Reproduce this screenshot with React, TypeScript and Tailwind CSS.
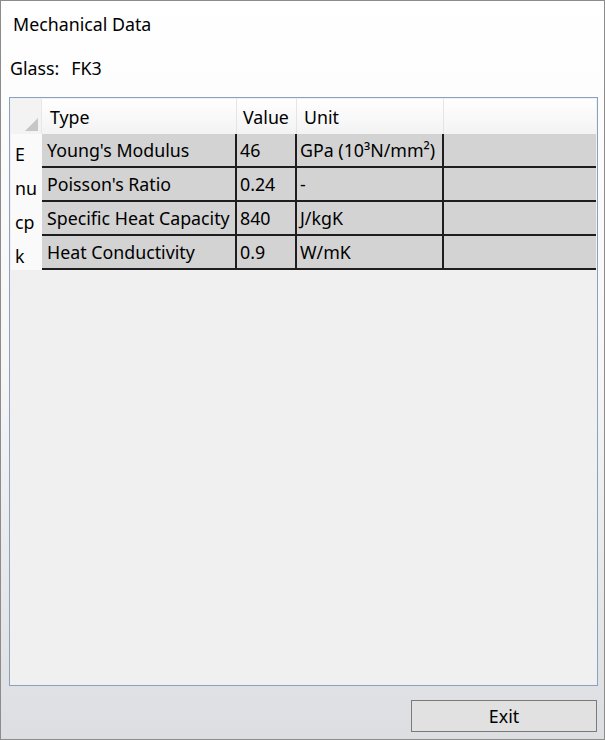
import React from 'react';

interface Row {
  key: string;
  type: string;
  value: string;
  unit: string;
}

const rows: Row[] = [
  { key: 'E', type: "Young's Modulus", value: '46', unit: 'GPa (10³N/mm²)' },
  { key: 'nu', type: "Poisson's Ratio", value: '0.24', unit: '-' },
  { key: 'cp', type: 'Specific Heat Capacity', value: '840', unit: 'J/kgK' },
  { key: 'k', type: 'Heat Conductivity', value: '0.9', unit: 'W/mK' },
];

export default function App() {
  return (
    <div
      className="w-[605px] h-[740px] flex flex-col border border-[#8c8c8c] bg-gradient-to-b from-white via-[#f6f6f7] to-[#dcdee1] text-[#000] text-[17.8px]"
      style={{ fontFamily: '"Noto Sans", "Open Sans", sans-serif' }}
    >
      <div className="pl-[12px] pt-[10px] h-[34px] leading-[26px]">Mechanical Data</div>
      <div className="pl-[9px] mt-[21px] h-[24px] leading-[24px] flex gap-[12px]">
        <span>Glass:</span>
        <span>FK3</span>
      </div>

      <div className="ml-[8px] mr-[6px] mt-[17px] h-[589px] border border-[#8aa2c0] bg-[#f0f0f0] flex flex-col p-[1px]">
        {/* header */}
        <div className="flex h-[35px] bg-gradient-to-b from-white to-[#f3f3f3]">
          <div className="w-[31px] relative border-r border-[#e8e8e8] bg-[#f3f3f3]">
            <svg className="absolute right-[3px] bottom-[3px]" width="13" height="13" viewBox="0 0 13 13">
              <polygon points="13,0 13,13 0,13" fill="#c6c6c6" />
            </svg>
          </div>
          <div className="w-[195px] pl-[8px] leading-[36px] border-r border-[#e5e5e5]">Type</div>
          <div className="w-[60px] pl-[6px] leading-[36px] border-r border-[#e5e5e5]">Value</div>
          <div className="w-[147px] pl-[7px] leading-[36px] border-r border-[#e5e5e5]">Unit</div>
          <div className="flex-1" />
        </div>

        {rows.map((r) => (
          <div key={r.key} className="flex h-[34px]">
            <div className="w-[31px] bg-[#fafafa] pl-[4px] leading-[40px]">{r.key}</div>
            <div className="flex-1 flex bg-[#d3d3d3] border-b-2 border-[#1e1e1e]">
              <div className="w-[195px] pl-[5px] leading-[32px] border-r-2 border-[#1e1e1e] whitespace-nowrap">{r.type}</div>
              <div className="w-[60px] pl-[3px] leading-[32px] border-r-2 border-[#1e1e1e]">{r.value}</div>
              <div className="w-[147px] pl-[3px] leading-[32px] border-r-2 border-[#1e1e1e] whitespace-nowrap">{r.unit}</div>
              <div className="flex-1" />
            </div>
          </div>
        ))}
      </div>

      <div className="flex justify-end pr-[7px] mt-[14px]">
        <button className="w-[186px] h-[32px] border border-[#7a7a7a] bg-[#e1e1e1] text-[17.8px] leading-[30px]">
          Exit
        </button>
      </div>
    </div>
  );
}
